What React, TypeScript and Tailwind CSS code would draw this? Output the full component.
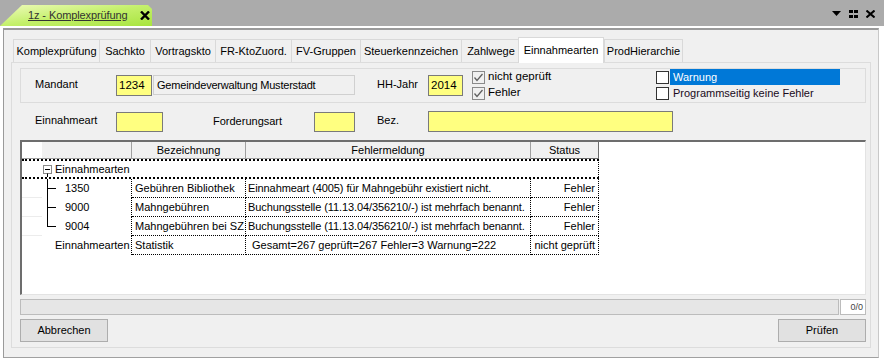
import React from "react"

const tabs = [
  { label: "Komplexprüfung", w: "w-[87px]" },
  { label: "Sachkto", w: "w-[52px]" },
  { label: "Vortragskto", w: "w-[66px]" },
  { label: "FR-KtoZuord.", w: "w-[77px]" },
  { label: "FV-Gruppen", w: "w-[70px]" },
  { label: "Steuerkennzeichen", w: "w-[102px]" },
  { label: "Zahlwege", w: "w-[60px]" },
  { label: "Einnahmearten", w: "w-[86px]", active: true },
  { label: "ProdHierarchie", w: "w-[79px]" },
]

const rows = [
  { nr: "1350", bez: "Gebühren Bibliothek", msg: "Einnahmeart (4005) für Mahngebühr existiert nicht.", st: "Fehler" },
  { nr: "9000", bez: "Mahngebühren", msg: "Buchungsstelle (11.13.04/356210/-) ist mehrfach benannt.", st: "Fehler" },
  { nr: "9004", bez: "Mahngebühren bei SZ", msg: "Buchungsstelle (11.13.04/356210/-) ist mehrfach benannt.", st: "Fehler" },
]

function Check({ checked, dim }: { checked?: boolean; dim?: boolean }) {
  return (
    <div className={`w-[13px] h-[13px] border shrink-0 flex items-center justify-center ${dim ? "border-[#8a8a8a] bg-[#f0f0f0]" : "border-[#333333] bg-white"}`}>
      {checked && (
        <svg width="11" height="11" viewBox="0 0 11 11">
          <polyline points="1.5,5.5 4,8.5 9.5,2" fill="none" stroke="#606060" strokeWidth="1.3" />
        </svg>
      )}
    </div>
  )
}

function Tree({ last }: { last?: boolean }) {
  return (
    <svg width="20" height="19" className="shrink-0">
      <line x1="5.5" y1="0" x2="5.5" y2={last ? 10 : 19} stroke="#000" />
      <line x1="5" y1="9.5" x2="14" y2="9.5" stroke="#000" />
    </svg>
  )
}

export default function App() {
  return (
    <div className="w-[884px] h-[360px] bg-[#ababab] overflow-hidden flex flex-col font-['Liberation_Sans',Arial,sans-serif] text-[11px] leading-none text-black">
      {/* document tab bar */}
      <div className="h-[26px] shrink-0 flex">
        <div className="self-end h-[21px] w-[152px] shrink-0 flex items-center pl-[28px] bg-linear-to-br from-[#eefab8] via-[#c4f06a] to-[#a8e43c] [clip-path:polygon(0_100%,22px_0,148px_0,152px_4px,152px_100%)]">
          <span className="underline text-[#333333] text-[11px] tracking-[-0.1px] whitespace-nowrap">1z - Komplexprüfung</span>
          <svg width="10" height="9" className="ml-[12px] shrink-0">
            <path d="M1 0.5 L9 8.5 M9 0.5 L1 8.5" stroke="#000" strokeWidth="2.4" />
          </svg>
        </div>
        <div className="ml-auto mr-[9px] self-center flex items-center gap-[8px] mt-[1px]">
          <svg width="9" height="5"><polygon points="0,0 9,0 4.5,5" fill="#000" /></svg>
          <svg width="9" height="8">
            <rect x="0" y="0" width="4" height="3" fill="#000" />
            <rect x="5" y="0" width="4" height="3" fill="#000" />
            <rect x="0" y="5" width="4" height="3" fill="#000" />
            <rect x="5" y="5" width="4" height="3" fill="#000" />
          </svg>
          <svg width="9" height="8">
            <path d="M0.5 0.5 L8.5 7.5 M8.5 0.5 L0.5 7.5" stroke="#000" strokeWidth="2" />
          </svg>
        </div>
      </div>

      {/* window body */}
      <div className="flex-1 bg-white pt-[2px] pl-[3px] pr-[5px] pb-[2px] flex">
        <div className="flex-1 flex flex-col border-t-2 border-l border-[#9a9a9a] border-r border-r-[#c8c8c8] border-b border-b-[#a0a0a0] bg-[#f0f0f0] pt-[6px] pl-[7px] pr-[7px] pb-[9px]">
          {/* tab strip */}
          <div className="flex items-end h-[26px] pl-[2px] shrink-0">
            {tabs.map((t) =>
              t.active ? (
                <div key={t.label} className={`${t.w} -ml-[2px] h-[26px] -mb-px bg-white border-t border-l border-r border-[#d9d9d9] flex items-center justify-center relative z-10`}>
                  {t.label}
                </div>
              ) : (
                <div key={t.label} className={`${t.w} h-[23px] border-t border-l border-r border-[#d9d9d9] -mr-px flex items-center justify-center`}>
                  {t.label}
                </div>
              )
            )}
          </div>

          {/* tab page */}
          <div className="flex-1 flex flex-col border border-[#dcdcdc] pt-[5px] pl-[8px] pr-[4px]">
            {/* group box */}
            <div className="h-[35px] border border-[#dcdcdc] flex items-start pl-[14px]">
              <span className="w-[81px] mt-[10px]">Mandant</span>
              <div className="w-[36px] h-[21px] mt-[6px] bg-[#ffff80] border border-[#7a7a7a] flex items-center pl-[2px] text-[11.5px]">1234</div>
              <div className="w-[202px] h-[20px] mt-[6px] ml-px bg-[#f0f0f0] border border-[#d0d0d0] flex items-center pl-[3px] tracking-[-0.2px]">Gemeindeverwaltung Musterstadt</div>
              <span className="w-[51px] ml-[22px] mt-[10px]">HH-Jahr</span>
              <div className="w-[35px] h-[21px] mt-[6px] bg-[#ffff80] border border-[#7a7a7a] flex items-center pl-[2px] text-[11.5px]">2014</div>
              <div className="w-[184px] ml-[9px] flex flex-col">
                <div className="h-[16px] flex items-center gap-[3px]"><Check checked dim /><span className="text-[11.5px]">nicht geprüft</span></div>
                <div className="h-[16px] flex items-center gap-[3px]"><Check checked dim /><span className="text-[11.5px]">Fehler</span></div>
              </div>
              <div className="flex flex-col">
                <div className="h-[16px] flex items-center gap-px">
                  <Check />
                  <span className="w-[170px] h-[16px] bg-[#0078d7] text-white flex items-center pl-[3px]">Warnung</span>
                </div>
                <div className="h-[16px] flex items-center gap-px">
                  <Check />
                  <span className="pl-[3px] text-[#1a0a1a]">Programmseitig keine Fehler</span>
                </div>
              </div>
            </div>

            {/* filter row */}
            <div className="h-[21px] mt-[8px] flex items-center pl-[15px]">
              <span className="w-[81px] -mt-[2px]">Einnahmeart</span>
              <div className="w-[47px] h-[20px] bg-[#ffff80] border border-[#7a7a7a]" />
              <span className="w-[101px] ml-[50px]">Forderungsart</span>
              <div className="w-[41px] h-[20px] bg-[#ffff80] border border-[#7a7a7a]" />
              <span className="w-[51px] ml-[22px] -mt-[2px]">Bez.</span>
              <div className="w-[245px] h-[21px] bg-[#ffff80] border border-[#7a7a7a]" />
            </div>

            {/* grid */}
            <div className="h-[155px] mt-[8px] bg-white border-t-2 border-l-2 border-[#6d6d6d] border-r border-r-[#e3e3e3] border-b border-b-[#e3e3e3] flex flex-col">
              <div className="flex h-[17px]">
                <div className="w-[20px] bg-white border-b border-[#a0a0a0]" />
                <div className="w-[90px] bg-[#f0f0f0] border-b border-r border-[#a0a0a0]" />
                <div className="w-[114px] bg-[#f0f0f0] border-b border-r border-[#a0a0a0] flex items-center justify-center">Bezeichnung</div>
                <div className="w-[285px] bg-[#f0f0f0] border-b border-r border-[#a0a0a0] flex items-center justify-center">Fehlermeldung</div>
                <div className="w-[68px] bg-[#f0f0f0] border-b border-r border-[#6d6d6d] flex items-center justify-center">Status</div>
              </div>

              {/* group row */}
              <div className="w-[577px] h-[20px] border-t-2 border-b-2 border-r border-dotted border-black flex items-center">
                <div className="w-[20px]" />
                <svg width="11" height="16" className="ml-px shrink-0 self-start">
                  <rect x="0.5" y="4.5" width="8" height="8" fill="#fff" stroke="#8a8a8a" />
                  <line x1="2" y1="8.5" x2="7" y2="8.5" stroke="#000" />
                  <line x1="4.5" y1="12.5" x2="4.5" y2="16" stroke="#000" />
                </svg>
                <span className="ml-px">Einnahmearten</span>
              </div>

              {rows.map((r, i) => (
                <div key={r.nr} className="flex h-[19px]">
                  <div className="w-[20px] border-b border-[#ececec]" />
                  <div className="w-[90px] flex items-center border-r border-dotted border-black">
                    <Tree last={i === rows.length - 1} />
                    <span className="ml-[3px]">{r.nr}</span>
                  </div>
                  <div className="w-[114px] flex items-center pl-[3px] border-r border-b border-dotted border-black whitespace-nowrap overflow-hidden">{r.bez}</div>
                  <div className="w-[285px] flex items-center pl-[2px] border-r border-b border-dotted border-black whitespace-nowrap overflow-hidden tracking-[-0.1px]">{r.msg}</div>
                  <div className="w-[68px] flex items-center justify-end pr-[3px] border-r border-b border-dotted border-black">{r.st}</div>
                </div>
              ))}
              <div className="flex h-[19px]">
                <div className="w-[20px]" />
                <div className="w-[90px] flex items-center pl-[13px] border-r border-dotted border-black">Einnahmearten</div>
                <div className="w-[114px] flex items-center pl-[3px] border-r border-b border-dotted border-black">Statistik</div>
                <div className="w-[285px] flex items-center pl-[6px] border-r border-b border-dotted border-black whitespace-nowrap overflow-hidden">Gesamt=267 geprüft=267 Fehler=3 Warnung=222</div>
                <div className="w-[68px] flex items-center justify-end pr-[3px] border-r border-b border-dotted border-black whitespace-nowrap">nicht geprüft</div>
              </div>
            </div>

            {/* status bar */}
            <div className="h-[16px] mt-[4px] flex gap-px">
              <div className="flex-1 bg-[#e6e6e6] border border-[#bcbcbc]" />
              <div className="w-[26px] bg-white border border-[#bcbcbc] flex items-center justify-end pr-[2px] text-[9px] text-[#444444]">0/0</div>
            </div>

            {/* buttons */}
            <div className="mt-[4px] flex justify-between">
              <button className="w-[88px] h-[23px] bg-[#e1e1e1] border border-[#adadad] flex items-center justify-center">Abbrechen</button>
              <button className="w-[88px] h-[23px] bg-[#e1e1e1] border border-[#adadad] flex items-center justify-center">Prüfen</button>
            </div>
          </div>
        </div>
      </div>
    </div>
  )
}
